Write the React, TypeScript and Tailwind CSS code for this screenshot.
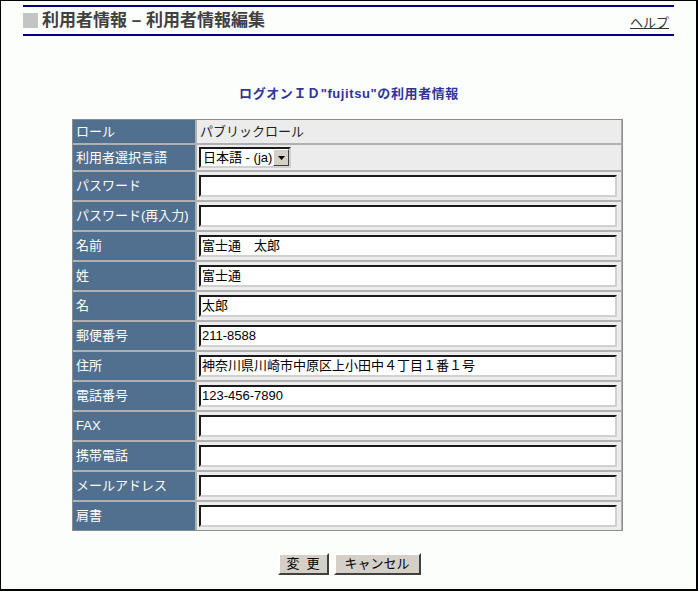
import { Fragment } from "react";
import type { FC, ReactNode } from "react";

const font = { fontFamily: '"Liberation Sans", "Noto Sans CJK JP", sans-serif' };

type Row = { label: string; value?: string };

const inputRows: Row[] = [
  { label: "パスワード" },
  { label: "パスワード(再入力)" },
  { label: "名前", value: "富士通　太郎" },
  { label: "姓", value: "富士通" },
  { label: "名", value: "太郎" },
  { label: "郵便番号", value: "211-8588" },
  { label: "住所", value: "神奈川県川崎市中原区上小田中４丁目１番１号" },
  { label: "電話番号", value: "123-456-7890" },
  { label: "FAX" },
  { label: "携帯電話" },
  { label: "メールアドレス" },
  { label: "肩書" },
];

const Label: FC<{ children: ReactNode; h: string }> = ({ children, h }) => (
  <div className={`bg-[#51708f] text-white text-[13px] pl-[3px] flex items-center ${h}`}>
    {children}
  </div>
);

const TextInput: FC<{ value?: string }> = ({ value }) => (
  <div className="w-[418px] h-[22px] bg-white border-2 border-t-[#1a1a1a] border-l-[#1a1a1a] border-b-[#d0d0d0] border-r-[#d0d0d0] flex items-center pl-[1px] text-[13px] text-black">
    {value}
  </div>
);

const Button: FC<{ children: ReactNode; w: string }> = ({ children, w }) => (
  <button
    className={`${w} h-[22px] bg-[#d4d0c8] text-[13px] text-black border-2 border-t-white border-l-white border-b-[#404040] border-r-[#404040] flex items-center justify-center`}
  >
    {children}
  </button>
);

export default function App() {
  return (
    <div
      style={font}
      className="w-[698px] h-[591px] bg-[#fcfefc] border-l border-t border-r-2 border-b-2 border-black flex flex-col"
    >
      {/* Header */}
      <div className="mx-[22px] mt-[4px] w-[651px] border-t-2 border-b-2 border-[#000080] h-[31px] flex items-center justify-between">
        <div className="flex items-center">
          <div className="w-[15px] h-[15px] bg-[#c4c4c4]" />
          <span className="ml-[4px] text-[17px] font-bold text-[#404040] leading-none">
            利用者情報 – 利用者情報編集
          </span>
        </div>
        <a className="mr-[5px] mt-[4px] text-[13px] text-[#333] underline">ヘルプ</a>
      </div>

      {/* Heading */}
      <div className="mt-[50px] text-center text-[13px] font-bold text-[#333399] leading-[16px] tracking-[0.6px] pl-[1px]">
        ログオンＩＤ"fujitsu"の利用者情報
      </div>

      {/* Form table */}
      <div className="mt-[17px] ml-[71px] w-[551px] bg-[#b0b0b0] border border-[#8c8c8c] grid grid-cols-[122px_424px] gap-[2px]">
        <Label h="h-[23px]">ロール</Label>
        <div className="bg-[#ececec] h-[23px] flex items-center pl-[3px] text-[13px] text-[#222]">
          パブリックロール
        </div>

        <Label h="h-[25px]">利用者選択言語</Label>
        <div className="bg-[#ececec] h-[25px] flex items-center pl-[2px]">
          <div className="w-[92px] h-[21px] bg-white border-2 border-t-[#1a1a1a] border-l-[#1a1a1a] border-b-[#d0d0d0] border-r-[#d0d0d0] flex items-center">
            <span className="flex-1 text-[13px] text-black pl-[2px] leading-none whitespace-nowrap">
              日本語 - (ja)
            </span>
            <span className="w-[16px] h-[17px] bg-[#d4d0c8] border border-t-white border-l-white border-b-[#404040] border-r-[#404040] flex items-center justify-center">
              <svg width="7" height="4" viewBox="0 0 7 4">
                <path d="M0 0h7L3.5 4z" fill="#000" />
              </svg>
            </span>
          </div>
        </div>

        {inputRows.map((r) => (
          <Fragment key={r.label}>
            <Label h="h-[28px]">{r.label}</Label>
            <div className="bg-[#ececec] h-[28px] flex items-center pl-[2px]">
              <TextInput value={r.value} />
            </div>
          </Fragment>
        ))}
      </div>

      {/* Buttons */}
      <div className="mt-[22px] flex justify-center gap-[5px] pl-[1px]">
        <Button w="w-[51px]">変&nbsp;&nbsp;更</Button>
        <Button w="w-[87px]">キャンセル</Button>
      </div>
    </div>
  );
}
